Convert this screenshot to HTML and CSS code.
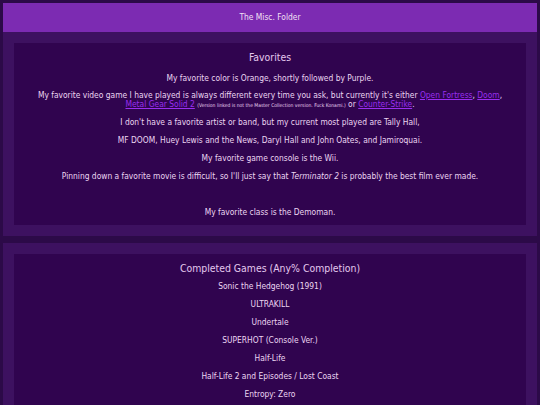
FILE: index.html
```html
<!DOCTYPE html>
<html>
<head>
<meta charset="utf-8">
<link rel="stylesheet" href="styles.css">
</head>
<body>
<header class="site-header">The Misc. Folder</header>
<section class="panel">
  <div class="panel-inner">
    <h2>Favorites</h2>
    <p>My favorite color is Orange, shortly followed by Purple.</p>
    <p class="tight">My favorite video game I have played is always different every time you ask, but currently it's either <a href="#">Open Fortress</a>, <a href="#">Doom</a>, <a href="#">Metal Gear Solid 2</a> <small>(Version linked is not the Master Collection version. Fuck Konami.)</small> or <a href="#">Counter-Strike</a>.</p>
    <p>I don't have a favorite artist or band, but my current most played are Tally Hall,</p>
    <p>MF DOOM, Huey Lewis and the News, Daryl Hall and John Oates, and Jamiroquai.</p>
    <p>My favorite game console is the Wii.</p>
    <p>Pinning down a favorite movie is difficult, so I'll just say that <em>Terminator 2</em> is probably the best film ever made.</p>
    <p><br></p>
    <p>My favorite class is the Demoman.</p>
  </div>
</section>
<section class="panel games">
  <div class="panel-inner">
    <h2>Completed Games (Any% Completion)</h2>
    <p>Sonic the Hedgehog (1991)</p>
    <p>ULTRAKILL</p>
    <p>Undertale</p>
    <p>SUPERHOT (Console Ver.)</p>
    <p>Half-Life</p>
    <p>Half-Life 2 and Episodes / Lost Coast</p>
    <p>Entropy: Zero</p>
    <p>Portal</p>
    <p>Portal 2</p>
  </div>
</section>
</body>
</html>
```
FILE: styles.css
```css
html, body {
  margin: 0;
  background: #2c0a48;
}
body {
  padding: 3px;
  font-family: "DejaVu Sans Condensed", "DejaVu Sans", sans-serif;
  font-size: 8.4px;
  color: #ecd6f2;
}
.site-header {
  background: #7c2bb2;
  height: 29px;
  line-height: 29px;
  text-align: center;
  color: #f2e0f4;
}
.panel {
  background: #3d1160;
  padding: 11px;
  margin-bottom: 7px;
}
.panel-inner {
  background: #30044f;
  padding: 8px 16px;
  text-align: center;
}
h2 {
  font-size: 10.4px;
  font-weight: normal;
  line-height: 13px;
  margin: 0 0 9px;
  color: #e4c8ee;
}
.games h2 {
  margin-bottom: 6px;
}
p {
  margin: 0 0 8px;
  line-height: 10px;
}
p.tight {
  line-height: 9px;
  margin-bottom: 8px;
}
p:last-child {
  margin-bottom: 0;
}
a {
  color: #9a2ef0;
}
small {
  font-size: 5px;
  line-height: 1;
}
```
